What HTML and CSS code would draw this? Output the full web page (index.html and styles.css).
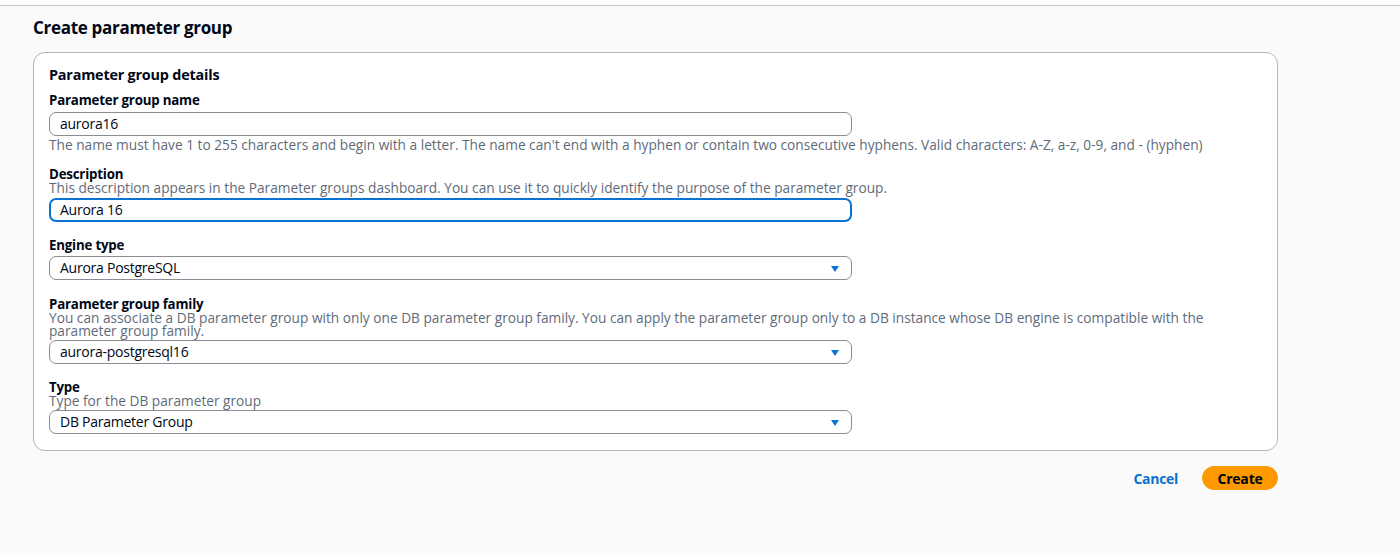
FILE: index.html
```html
<!DOCTYPE html>
<html>
<head>
<meta charset="utf-8">
<link rel="stylesheet" href="styles.css">
</head>
<body>
<div class="topbar"></div>
<main class="page">
  <h1 class="title">Create parameter group</h1>
  <section class="panel">
    <h2 class="panel-title">Parameter group details</h2>

    <div class="field f-name">
      <div class="label">Parameter group name</div>
      <div class="input">aurora16</div>
      <div class="hint after">The name must have 1 to 255 characters and begin with a letter. The name can't end with a hyphen or contain two consecutive hyphens. Valid characters: A-Z, a-z, 0-9, and - (hyphen)</div>
    </div>

    <div class="field f-desc">
      <div class="label tight">Description</div>
      <div class="hint">This description appears in the Parameter groups dashboard. You can use it to quickly identify the purpose of the parameter group.</div>
      <div class="input focused">Aurora 16</div>
    </div>

    <div class="field f-engine">
      <div class="label">Engine type</div>
      <div class="input select">Aurora PostgreSQL<span class="caret"></span></div>
    </div>

    <div class="field f-family">
      <div class="label tight">Parameter group family</div>
      <div class="hint wrap">You can associate a DB parameter group with only one DB parameter group family. You can apply the parameter group only to a DB instance whose DB engine is compatible with the parameter group family.</div>
      <div class="input select">aurora-postgresql16<span class="caret"></span></div>
    </div>

    <div class="field f-type">
      <div class="label tight">Type</div>
      <div class="hint short">Type for the DB parameter group</div>
      <div class="input select">DB Parameter Group<span class="caret"></span></div>
    </div>
  </section>

  <div class="actions">
    <button class="btn-link">Cancel</button>
    <button class="btn-primary">Create</button>
  </div>
</main>
</body>
</html>
```

FILE: styles.css
```css
* { box-sizing: border-box; }
html, body {
  margin: 0;
  padding: 0;
  background: #fafafa;
  font-family: "Open Sans", "Noto Sans", Arial, sans-serif;
  color: #000716;
}
.topbar {
  height: 6px;
  background: #ffffff;
  border-bottom: 1px solid #c6c6cd;
}
.page {
  padding-left: 33px;
  width: 1278px;
}
.title {
  margin: 0;
  padding-top: 10px;
  height: 46px;
  font-size: 17px;
  line-height: 24px;
  font-weight: 700;
  letter-spacing: -0.3px;
}
.panel {
  background: #ffffff;
  border: 1px solid #b4b4bb;
  border-radius: 12px;
  height: 399px;
  padding: 12px 16px 0 15px;
}
.panel-title {
  margin: 0;
  font-size: 14.4px;
  line-height: 20px;
  font-weight: 700;
  letter-spacing: -0.2px;
}
.field { width: 803px; }
.f-name { margin-top: 6px; }
.f-desc { margin-top: 14px; }
.f-engine { margin-top: 14px; }
.f-family { margin-top: 17px; }
.f-type { margin-top: 16px; }

.label {
  font-size: 13.3px;
  line-height: 18px;
  font-weight: 700;
  margin-bottom: 3px;
  letter-spacing: -0.2px;
}
.f-engine .label { margin-bottom: 2px; }
.label.tight { line-height: 14px; margin-bottom: 0; }
.hint {
  font-size: 13.7px;
  line-height: 14px;
  color: #5f6b7a;
  white-space: nowrap;
  letter-spacing: 0;
  margin-bottom: 3px;
}
.hint.short { margin-bottom: 2px; }
.hint.after { margin-top: 1px; margin-bottom: 0; line-height: 16px; }
.hint.wrap {
  white-space: normal;
  width: 1155px;
  line-height: 13px;
}
.input {
  position: relative;
  height: 24px;
  border: 1px solid #8c8c94;
  border-radius: 7px;
  padding: 0 10px;
  font-size: 14px;
  line-height: 22px;
  letter-spacing: -0.25px;
  color: #000716;
  background: #ffffff;
}
.input.focused {
  border: 2px solid #0972d3;
  padding: 0 9px;
  line-height: 20px;
}
.caret {
  position: absolute;
  right: 12px;
  top: 9px;
  width: 0;
  height: 0;
  border-left: 4px solid transparent;
  border-right: 4px solid transparent;
  border-top: 6px solid #0972d3;
}
.actions {
  display: flex;
  justify-content: flex-end;
  align-items: center;
  gap: 24px;
  margin-top: 15px;
}
.btn-link {
  font-family: inherit;
  background: none;
  border: none;
  padding: 0;
  color: #0972d3;
  font-size: 14px;
  font-weight: 700;
  letter-spacing: -0.3px;
  cursor: pointer;
}
.btn-primary {
  font-family: inherit;
  background: #ff9900;
  border: 1px solid #ff9900;
  border-radius: 20px;
  width: 76px;
  height: 24px;
  padding: 0;
  color: #000716;
  font-size: 14px;
  font-weight: 700;
  letter-spacing: -0.2px;
  cursor: pointer;
}
```
